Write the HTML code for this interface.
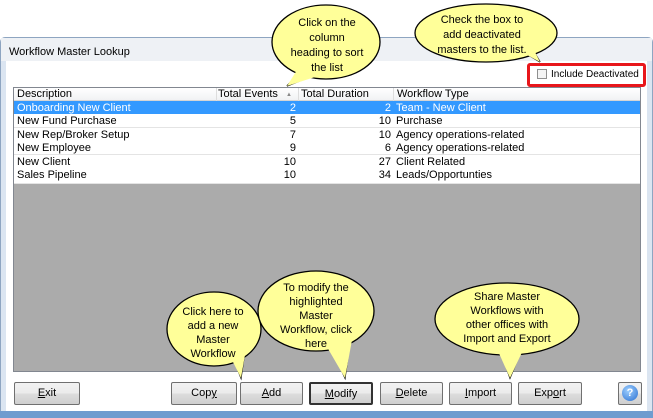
<!DOCTYPE html><html><head><style>
*{margin:0;padding:0;box-sizing:border-box}
body{width:653px;height:418px;background:#fff;position:relative;overflow:hidden;font-family:"Liberation Sans",sans-serif;font-size:11px;color:#000}
.a{position:absolute}
.btn{position:absolute;top:382px;height:23px;border:1px solid #707070;border-radius:2px;background:linear-gradient(#f2f2f2,#ebebeb 50%,#dddddd 51%,#cfcfcf);text-align:center;line-height:21px;font-size:11px}
.row{position:absolute;left:14px;width:626px;height:14px;line-height:14px;border-bottom:1px solid #e4e4e4;background:#fff}
.row span{position:absolute;top:0}
.c1{left:3px}.c2{left:202px;width:80px;text-align:right}.c3{left:284px;width:93px;text-align:right}.c4{left:382px}
</style></head><body>
<div class="a" style="left:0;top:37px;width:653px;height:381px;background:#dbe5f1;border:1px solid #8ea5c1;border-radius:5px 5px 0 0"></div>
<div class="a" style="left:1px;top:38px;width:651px;height:23px;background:#eef1f5"></div>
<div class="a" style="left:9px;top:46px;font-size:11px">Workflow Master Lookup</div>
<div class="a" style="left:6px;top:61px;width:641px;height:351px;background:#fff"></div>
<div class="a" style="left:0;top:411px;width:653px;height:7px;background:#6f9ccf"></div>
<div class="a" style="left:13px;top:87px;width:628px;height:285px;background:#ababab;border:1px solid #828790"></div>
<div class="a" style="left:14px;top:88px;width:626px;height:13px;background:linear-gradient(#fff,#f1f2f4);border-bottom:1px solid #d5d5d5;line-height:13px">
<span class="a" style="left:3px">Description</span><span class="a" style="left:204px">Total Events</span><span class="a" style="left:272px;font-size:6px;color:#888;top:1px">▲</span><span class="a" style="left:287px">Total Duration</span><span class="a" style="left:383px">Workflow Type</span>
<div class="a" style="left:202px;top:0;width:1px;height:13px;background:#ddd"></div><div class="a" style="left:284px;top:0;width:1px;height:13px;background:#ddd"></div><div class="a" style="left:379px;top:0;width:1px;height:13px;background:#ddd"></div></div>
<div class="row" style="top:101px;background:#3399ff;color:#fff"><span class="c1">Onboarding New Client</span><span class="c2">2</span><span class="c3">2</span><span class="c4">Team - New Client</span></div>
<div class="row" style="top:114px"><span class="c1">New Fund Purchase</span><span class="c2">5</span><span class="c3">10</span><span class="c4">Purchase</span></div>
<div class="row" style="top:128px"><span class="c1">New Rep/Broker Setup</span><span class="c2">7</span><span class="c3">10</span><span class="c4">Agency operations-related</span></div>
<div class="row" style="top:141px"><span class="c1">New Employee</span><span class="c2">9</span><span class="c3">6</span><span class="c4">Agency operations-related</span></div>
<div class="row" style="top:155px"><span class="c1">New Client</span><span class="c2">10</span><span class="c3">27</span><span class="c4">Client Related</span></div>
<div class="row" style="top:168px;height:16px"><span class="c1">Sales Pipeline</span><span class="c2">10</span><span class="c3">34</span><span class="c4">Leads/Opportunties</span></div>
<div class="a" style="left:527px;top:63px;width:119px;height:24px;border:3px solid #e8161b;border-radius:3px"></div>
<div class="a" style="left:537px;top:69px;width:10px;height:10px;border:1px solid #8f8f8f;background:#f4f4f4"></div>
<div class="a" style="left:551px;top:69px;font-size:10px">Include Deactivated</div>
<div class="btn" style="left:14px;width:66px"><u>E</u>xit</div>
<div class="btn" style="left:171px;width:66px">Cop<u>y</u></div>
<div class="btn" style="left:240px;width:63px"><u>A</u>dd</div>
<div class="btn" style="left:309px;width:64px;border:2px solid #333"><u>M</u>odify</div>
<div class="btn" style="left:380px;width:63px"><u>D</u>elete</div>
<div class="btn" style="left:449px;width:63px"><u>I</u>mport</div>
<div class="btn" style="left:518px;width:64px">Exp<u>o</u>rt</div>
<div class="btn" style="left:618px;width:24px"><div class="a" style="left:3px;top:2px;width:16px;height:16px;border-radius:50%;background:radial-gradient(circle at 40% 35%,#9fd0ff,#2a6fd0);color:#fff;font-weight:bold;line-height:16px;font-size:11px">?</div></div>
<svg class="a" style="left:0;top:0" width="653" height="418">
<g fill="#ffff99" stroke="#000" stroke-width="1.3">
<path d="M300,72 L287,86 L312,76 Z"/><ellipse cx="326" cy="42" rx="54" ry="37"/><path d="M297,70 L287,86 L315,77" stroke="none"/>
<path d="M520,50 L540,62 L530,45 Z"/><ellipse cx="486" cy="33" rx="71" ry="29"/><path d="M518,50 L540,62 L531,44" stroke="none"/>
<path d="M232,355 L241,378 L245,350 Z"/><ellipse cx="214" cy="329" rx="47" ry="37"/><path d="M230,356 L241,378 L246,349" stroke="none"/>
<path d="M330,345 L345,378 L350,342 Z"/><ellipse cx="316" cy="311" rx="58" ry="40"/><path d="M327,347 L345,378 L352,340" stroke="none"/>
<path d="M500,350 L510,378 L522,349 Z"/><ellipse cx="507" cy="319" rx="72" ry="36"/><path d="M498,351 L510,378 L524,348" stroke="none"/>
</g>
<g font-family="Liberation Sans,sans-serif" font-size="11" text-anchor="middle" fill="#000">
<text x="327" y="26">Click on the</text><text x="327" y="41">column</text><text x="327" y="56">heading to sort</text><text x="327" y="71">the list</text>
<text x="482" y="23">Check the box to</text><text x="482" y="38">add deactivated</text><text x="482" y="53">masters to the list.</text>
<text x="213" y="315">Click here to</text><text x="213" y="329">add a new</text><text x="213" y="343">Master</text><text x="213" y="357">Workflow</text>
<text x="316" y="291">To modify the</text><text x="316" y="305">highlighted</text><text x="316" y="319">Master</text><text x="316" y="333">Workflow, click</text><text x="316" y="347">here</text>
<text x="507" y="300">Share Master</text><text x="507" y="314">Workflows with</text><text x="507" y="328">other offices with</text><text x="507" y="342">Import and Export</text>
</g></svg>
</body></html>
